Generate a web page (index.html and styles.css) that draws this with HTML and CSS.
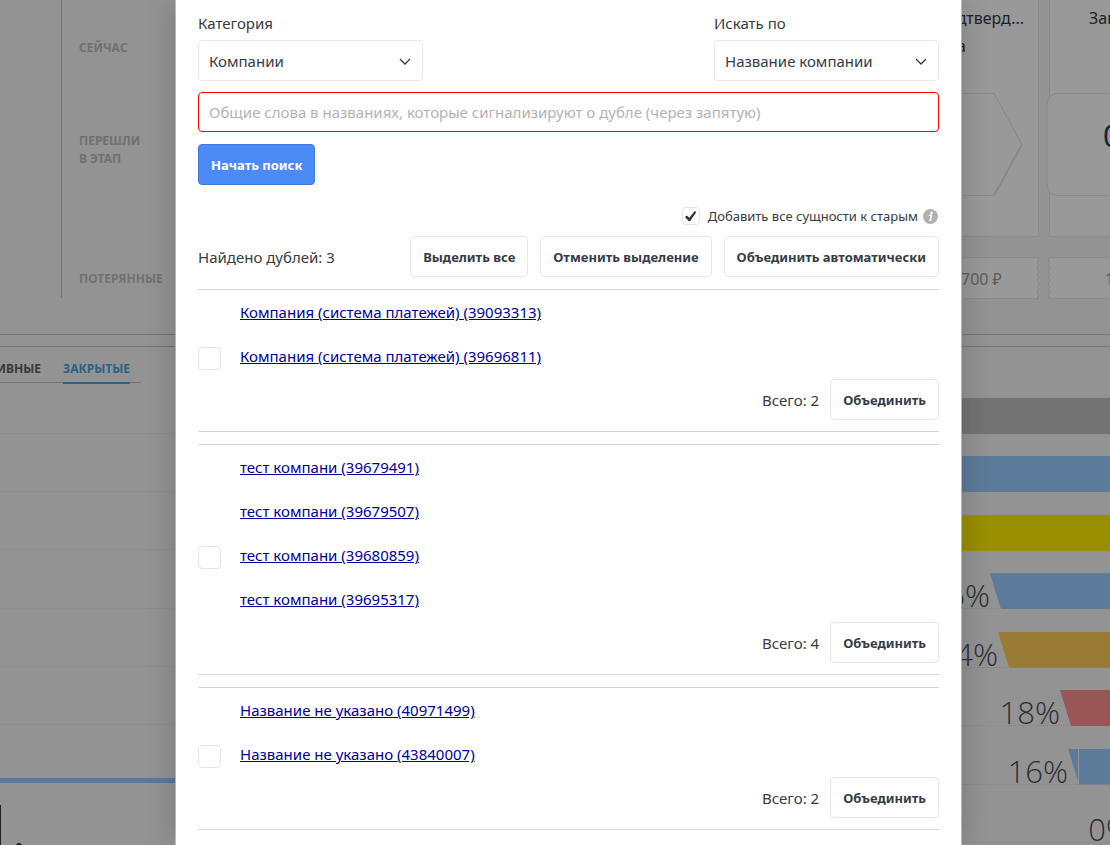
FILE: index.html
```html
<!DOCTYPE html>
<html lang="ru">
<head>
<meta charset="utf-8">
<meta name="viewport" content="width=device-width, initial-scale=1">
<title>Поиск дублей</title>
<link rel="stylesheet" href="styles.css">
</head>
<body>
<div class="page">
  <aside class="side side-left">
    <section class="board">
      <div class="stage-names">
        <div class="stage-name stage-now">СЕЙЧАС</div>
        <div class="stage-name stage-moved">ПЕРЕШЛИ<br>В ЭТАП</div>
        <div class="stage-name stage-lost">ПОТЕРЯННЫЕ</div>
      </div>
    </section>
    <div class="divider"></div>
    <nav class="tabs">
      <a class="tab" href="#active">АКТИВНЫЕ</a>
      <a class="tab tab-current" href="#closed">ЗАКРЫТЫЕ</a>
    </nav>
    <div class="grid-lines"><i></i><i></i><i></i><i></i><i></i><i></i></div>
    <div class="total-line"></div>
    <svg class="total-mark" width="24" height="48" viewBox="0 0 24 48" aria-hidden="true"><path d="M0 5h1v43H0z"/><circle cx="19" cy="46" r="3"/></svg>
  </aside>

  <main class="modal">
    <form class="search">
      <div class="filters">
        <label class="field">Категория
          <span class="select"><select><option>Компании</option></select>
          <svg viewBox="0 0 12 8" width="12" height="8"><path d="M1 1l5 5 5-5"/></svg></span>
        </label>
        <label class="field">Искать по
          <span class="select"><select><option>Название компании</option></select>
          <svg viewBox="0 0 12 8" width="12" height="8"><path d="M1 1l5 5 5-5"/></svg></span>
        </label>
      </div>
      <input class="words" type="text" aria-label="Общие слова" placeholder="Общие слова в названиях, которые сигнализируют о дубле (через запятую)">
      <button class="btn btn-primary" type="button">Начать поиск</button>
    </form>

    <div class="option">
      <label class="option-label"><input class="check check-small" type="checkbox" checked>Добавить все сущности к старым</label>
      <svg class="info" viewBox="0 0 15 15" width="15" height="15" aria-hidden="true"><circle cx="7.5" cy="7.5" r="7.5" fill="#b0b0b0"/><circle cx="8.6" cy="3.7" r="1.2" fill="#fff"/><path d="M6 6.3h2.4L7.3 11.3h1.2" fill="none" stroke="#fff" stroke-width="1.6"/></svg>
    </div>
    <div class="toolbar">
      <span class="found">Найдено дублей: 3</span>
      <button class="btn" type="button">Выделить все</button>
      <button class="btn" type="button">Отменить выделение</button>
      <button class="btn" type="button">Объединить автоматически</button>
    </div>

    <div class="groups">
      <section class="group">
        <input class="check" type="checkbox" aria-label="Выбрать группу 1">
        <div class="group-body">
          <a href="#39093313">Компания (система платежей) (39093313)</a>
          <a href="#39696811">Компания (система платежей) (39696811)</a>
          <div class="group-foot">Всего: 2 <button class="btn" type="button">Объединить</button></div>
        </div>
      </section>
      <section class="group">
        <input class="check" type="checkbox" aria-label="Выбрать группу 2">
        <div class="group-body">
          <a href="#39679491">тест компани (39679491)</a>
          <a href="#39679507">тест компани (39679507)</a>
          <a href="#39680859">тест компани (39680859)</a>
          <a href="#39695317">тест компани (39695317)</a>
          <div class="group-foot">Всего: 4 <button class="btn" type="button">Объединить</button></div>
        </div>
      </section>
      <section class="group">
        <input class="check" type="checkbox" aria-label="Выбрать группу 3">
        <div class="group-body">
          <a href="#40971499">Название не указано (40971499)</a>
          <a href="#43840007">Название не указано (43840007)</a>
          <div class="group-foot">Всего: 2 <button class="btn" type="button">Объединить</button></div>
        </div>
      </section>
    </div>
  </main>

  <aside class="side side-right">
    <section class="board cards">
      <div class="column column-first">
        <div class="card">
          <div class="card-title"><span>Подтверд...</span><span>оплата</span></div>
          <svg class="arrow" viewBox="0 0 77 103" width="77" height="103"><path d="M0 .5h48M0 102.5h48" stroke="#e6e6e6"/><path d="M48 .5L76 51.500" stroke="#e2e2e2"/><path d="M76 51.500L48 102.500" stroke="#e2e2e2" stroke-width="2"/></svg>
        </div>
        <div class="lost">700 ₽<svg class="wave" viewBox="0 0 4 42" width="4" height="42"><path d="M2 0q2 1.500 0 3t0 3 0 3 0 3 0 3 0 3 0 3 0 3 0 3 0 3 0 3 0 3 0 3 0 3"/></svg></div>
      </div>
      <div class="column column-second">
        <div class="card">
          <div class="card-title"><span>Завершен</span></div>
          <div class="amount">0</div>
        </div>
        <div class="lost"><svg class="wave" viewBox="0 0 4 42" width="4" height="42"><path d="M2 0q-2 1.500 0 3t0 3 0 3 0 3 0 3 0 3 0 3 0 3 0 3 0 3 0 3 0 3 0 3 0 3"/></svg>1</div>
      </div>
    </section>
    <div class="divider"></div>
    <div class="funnel">
      <div class="row"><div class="bar bar-full bar-gray"></div></div>
      <div class="row"><div class="bar bar-full bar-blue"></div></div>
      <div class="row"><div class="bar bar-full bar-yellow"></div></div>
      <div class="row row-line"><span>46%</span><div class="bar bar-blue" style="width:120px"></div></div>
      <div class="row row-line"><span>44%</span><div class="bar bar-orange" style="width:112px"></div></div>
      <div class="row row-line"><span>18%</span><div class="bar bar-red" style="width:50px"></div></div>
      <div class="row row-line"><span>16%</span><div class="bar bar-blue bar-split" style="width:42px"></div></div>
      <div class="row row-line row-zero"><span>0%</span></div>
    </div>
  </aside>
  <div class="dim"></div>
</div>
</body>
</html>
```
FILE: styles.css
```css
* { box-sizing: border-box; }
body {
  margin: 0;
  overflow: hidden;
  background: #f5f5f5;
  color: #363b44;
  font: 15px/22px "Noto Sans", "Open Sans", sans-serif;
}
.page {
  position: relative;
  display: grid;
  grid-template-columns: 176px minmax(0, 1fr) 149px;
  height: 100vh;
  overflow: hidden;
}
.side { overflow: hidden; min-width: 0; }
.dim { position: absolute; inset: 0; background: rgba(0, 0, 0, .4); }
.board { height: 334px; }
.divider { height: 13px; border: solid #c4c4c4; border-width: 1px 0; }

/* left side */
.stage-names {
  height: 298px;
  margin-left: 61px;
  padding: 39px 0 0 17px;
  border-left: 1px solid #c0c0c0;
  color: #bcbcbc;
  font-size: 12px;
  font-weight: 700;
  line-height: 18px;
}
.stage-moved { margin-top: 75px; }
.stage-lost { margin-top: 102px; }
.tabs {
  display: flex;
  justify-content: flex-end;
  gap: 22px;
  width: 141px;
  height: 36px;
  padding: 12px 11px 0 0;
  border-bottom: 1px solid #c0c0c0;
}
.tab {
  height: 25px;
  color: #5e5e66;
  font-size: 12px;
  font-weight: 700;
  line-height: 20px;
  text-decoration: none;
}
.tab-current { color: #43a5dc; border-bottom: 2px solid #43a5dc; }
.grid-lines {
  display: flex;
  flex-direction: column;
  justify-content: space-between;
  height: 292px;
  margin-top: 50px;
}
.grid-lines i { border-top: 1px dotted #e4e4e4; }
.total-line { height: 5px; margin-top: 53px; background: #9cf; }
.total-mark { display: block; margin-top: 17px; fill: #313942; }

/* dialog */
.modal {
  z-index: 1;
  padding: 12px 22px 0;
  background: #fff;
  box-shadow: 0 0 30px rgba(0, 0, 0, .2), 0 0 0 1px #c8c8c8;
}
.search { display: flex; flex-direction: column; align-items: flex-start; }
.filters { display: flex; justify-content: space-between; width: 100%; }
.field { width: 225px; }
.select { position: relative; display: block; margin-top: 6px; }
.select svg {
  position: absolute;
  right: 12px;
  top: 18px;
  fill: none;
  stroke: #363b44;
  stroke-width: 1.3;
  pointer-events: none;
}
select, .words {
  width: 100%;
  height: 41px;
  padding: 0 10px;
  border: 1px solid #e8e8eb;
  border-radius: 4px;
  background: #fff;
  color: #363b44;
  font: inherit;
  appearance: none;
}
.words { height: 40px; margin: 11px 0 12px; border-color: #f00; }
.words::placeholder { color: #b3b3b3; opacity: 1; }
.btn {
  height: 41px;
  padding: 0 12px;
  border: 1px solid #e8e8eb;
  border-radius: 4px;
  background: #fff;
  color: #363b44;
  font: 700 13px/20px "Noto Sans", "Open Sans", sans-serif;
  white-space: nowrap;
}
.btn-primary { border-color: #3f79d8; background: #4c8bf7; color: #fff; }
.option {
  display: flex;
  align-items: center;
  justify-content: flex-end;
  gap: 5px;
  margin-top: 22px;
  padding-right: 1px;
  font-size: 13px;
  line-height: 18px;
}
.option-label { display: flex; align-items: center; gap: 8px; }
.check {
  width: 23px;
  height: 23px;
  margin: 0;
  border: 1px solid #e5e5e8;
  border-radius: 4px;
  background: #fff;
  appearance: none;
}
.check-small { width: 18px; height: 18px; }
.check-small:checked::before {
  content: "";
  display: block;
  width: 12px;
  height: 12px;
  margin: 2px;
  background: #2c313b;
  clip-path: polygon(2% 58%, 18% 46%, 38% 64%, 82% 10%, 98% 14%, 46% 92%, 34% 94%);
}
.toolbar { display: flex; align-items: center; gap: 12px; margin-top: 11px; }
.found { margin-right: auto; }
.groups { display: flex; flex-direction: column; gap: 12px; margin-top: 12px; }
.group {
  display: grid;
  grid-template-columns: 42px 1fr;
  align-items: center;
  padding-bottom: 11px;
  border: solid #d6d6d8;
  border-width: 1px 0;
}
.group > .check { margin-top: 6px; }
.group-body { display: flex; flex-direction: column; align-items: flex-start; }
.group-body a { color: #00009c; line-height: 44px; }
.group-foot {
  display: flex;
  align-items: center;
  align-self: flex-end;
  gap: 11px;
  margin-top: 1px;
}

/* right side */
.cards {
  display: flex;
  gap: 10px;
  color: #313942;
  font-size: 16px;
}
.column { display: flex; flex-direction: column; gap: 20px; }
.column-first { width: 78px; }
.column-second { flex: 1; }
.card {
  height: 237px;
  border: solid #e6e6e6;
  border-width: 0 1px 1px 0;
  background: #fff;
}
.column-second .card { border-width: 0 0 1px 1px; }
.card-title {
  display: flex;
  flex-direction: column;
  align-items: flex-end;
  height: 93px;
  padding: 4px 14px 0 0;
  line-height: 28px;
}
.card-title span:nth-child(2) { margin-right: 58px; }
.column-second .card-title { align-items: flex-start; padding-left: 39px; }
.arrow { display: block; overflow: visible; fill: none; }
.arrow path { transform: translateX(-15px); }
.amount {
  height: 103px;
  margin-left: -3px;
  padding: 24px 0 0 55px;
  border: solid #e6e6e6;
  border-width: 1px 0 1px 1px;
  border-radius: 10px 0 0 10px;
  background: #fff;
  color: #203c66;
  font-size: 30px;
  line-height: 36px;
}
.lost {
  position: relative;
  height: 42px;
  padding-right: 38px;
  border: solid #e6e6e6;
  border-width: 1px 0;
  background: #fff;
  color: #9a9a9a;
  line-height: 42px;
  text-align: right;
  white-space: nowrap;
}
.column-second .lost { padding-left: 56px; text-align: left; }
.wave { position: absolute; right: -1px; top: 0; fill: none; stroke: #dcdcdc; }
.column-second .wave { left: -2px; right: auto; }
.funnel {
  display: flex;
  flex-direction: column;
  justify-content: space-between;
  height: 445px;
  margin-top: 51px;
}
.row { display: flex; justify-content: flex-end; height: 36px; }
.row-line { border-bottom: 1px dotted #e0e0e0; }
.row span {
  color: #4a4d56;
  font: 300 31px/44px "Open Sans", "Noto Sans", sans-serif;
}
.bar { flex: none; height: 36px; clip-path: polygon(0 0, 100% 0, 100% 100%, 11px 100%); }
.bar-full { width: 100%; clip-path: none; }
.bar-gray { background: #c0c0c0; }
.bar-blue { background: #9cf; }
.bar-yellow { background: #fe0; }
.bar-orange { background: #ffcd5a; }
.bar-red { background: #ff8f92; }
.bar-split { background: linear-gradient(90deg, #9cf 10px, #f5f5f5 10px 11px, #9cf 11px); }
.row-zero { margin-right: -21px; }
```
